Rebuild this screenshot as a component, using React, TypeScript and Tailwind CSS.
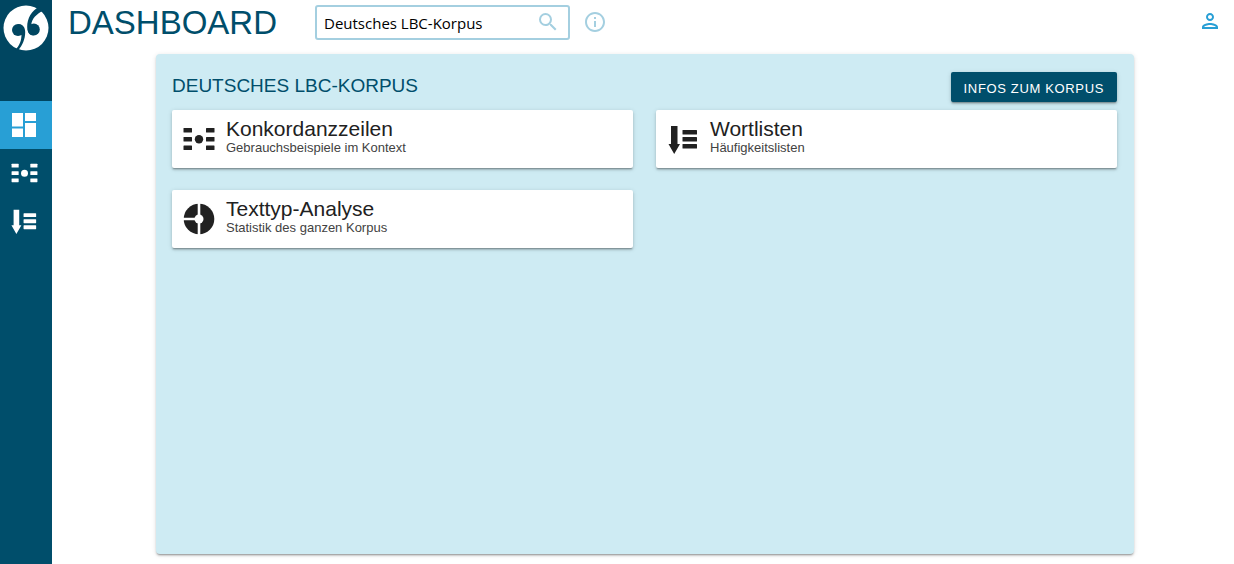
import type { ReactNode } from "react";
import { MdInfoOutline, MdOutlinePerson, MdSearch } from "react-icons/md";

type IconProps = { className?: string };

const Logo = () => (
    <svg viewBox="0 0 46 46" className="h-[46px] w-[46px]" aria-hidden="true">
        <circle cx="23" cy="23" r="22.5" fill="#fff" />
        <g fill="#004661">
            <circle cx="15" cy="25" r="6" />
            <path d="M15 19C19.500 19 22.200 22 22.200 27C22.200 34 19.500 40.500 15 45.500L12 45C16.500 41 18.800 35 18.400 29Z" />
            <circle cx="30.8" cy="24.500" r="6" />
            <path d="M30.500 30.500C26.500 30.500 24.200 27 24.200 22C24.200 13 28.500 6 36.500 1.500L40.500 5.500C33.500 9 29 13.500 28.300 19.500Z" />
        </g>
    </svg>
);

const DashboardIcon = ({ className }: IconProps) => (
    <svg viewBox="0 0 24 24" fill="currentColor" className={className}>
        <path d="M0 0h11v13.500H0zM0 15.500h11V24H0zM13 0h11v8H13zM13 10h11v14H13z" />
    </svg>
);

const ConcordanceIcon = ({ className }: IconProps) => (
    <svg viewBox="0 0 32 24" fill="currentColor" className={className}>
        <rect x="0.500" y="1" width="8.500" height="4.500" rx="0.500" />
        <rect x="0.500" y="10" width="8.500" height="4.500" rx="0.500" />
        <rect x="0.500" y="18.500" width="8.500" height="4.500" rx="0.500" />
        <rect x="23" y="1" width="8.500" height="4.500" rx="0.500" />
        <rect x="23" y="10" width="8.500" height="4.500" rx="0.500" />
        <rect x="23" y="18.500" width="8.500" height="4.500" rx="0.500" />
        <circle cx="16" cy="12.200" r="4.200" />
    </svg>
);

const WordlistIcon = ({ className }: IconProps) => (
    <svg viewBox="0 0 30 30" fill="currentColor" className={className}>
        <path d="M3 2h6.500v18h2.500L6.200 30 .5 20H3z" />
        <rect x="14.500" y="6" width="14.500" height="4.500" rx="0.500" />
        <rect x="14.500" y="13" width="14.500" height="4.500" rx="0.500" />
        <rect x="14.500" y="20" width="14.500" height="4.500" rx="0.500" />
    </svg>
);

const TextTypeIcon = ({ className }: IconProps) => (
    <svg viewBox="0 0 32 32" className={className}>
        <circle cx="16" cy="16" r="15.300" fill="currentColor" />
        <circle cx="16" cy="16" r="4.500" fill="#fff" />
        <path d="M16 0v32M0 16h16" stroke="#fff" strokeWidth="2.600" />
    </svg>
);

const FeatureCard = ({
    icon,
    title,
    description,
}: {
    icon: ReactNode;
    title: string;
    description: string;
}) => (
    <a
        href="#"
        className="flex h-[58px] items-center gap-[11px] rounded-xs bg-white pl-[11px] text-[#212121] shadow-[0_2px_2px_rgba(0,0,0,0.16),0_1px_5px_rgba(0,0,0,0.14),0_2px_1px_-1px_rgba(0,0,0,0.2)]"
    >
        <span className="flex w-8 shrink-0 justify-center">{icon}</span>
        <span className="flex flex-col pb-[6px]">
            <span className="text-[21px] leading-[22px]">{title}</span>
            <span className="text-[13px] leading-[15px] text-[#424242]">
                {description}
            </span>
        </span>
    </a>
);

const Sidebar = () => (
    <aside className="flex w-[52px] shrink-0 flex-col bg-[#004e6b]">
        <a
            href="#"
            aria-label="Home"
            className="flex h-[101px] justify-center bg-[#004661] pt-[5px]"
        >
            <Logo />
        </a>
        <nav className="flex flex-col text-white">
            <a
                href="#"
                aria-label="Dashboard"
                className="flex h-12 items-center justify-center bg-[#289fd5] pr-1"
            >
                <DashboardIcon className="h-6 w-6" />
            </a>
            <a
                href="#"
                aria-label="Konkordanzzeilen"
                className="flex h-12 items-center justify-center pr-1"
            >
                <ConcordanceIcon className="h-5 w-[27px]" />
            </a>
            <a
                href="#"
                aria-label="Wortlisten"
                className="flex h-12 items-center justify-center pr-1"
            >
                <WordlistIcon className="h-[26px] w-[26px]" />
            </a>
        </nav>
    </aside>
);

const Header = () => (
    <header className="flex h-11 items-center pr-3 pl-4">
        <h1 className="w-[247px] pt-[2px] text-[33px] leading-10 text-[#004e6b]">
            DASHBOARD
        </h1>
        <label className="flex h-[35px] w-[255px] items-center rounded-[3px] border-2 border-[#a4cfe0] bg-white pr-2 pl-[7px]">
            <input
                aria-label="Korpus"
                defaultValue="Deutsches LBC-Korpus"
                className="min-w-0 flex-1 pt-[2px] font-['Open_Sans',sans-serif] text-[15px] text-black outline-none"
            />
            <MdSearch size={24} className="shrink-0 text-[#a4cfe0]" />
        </label>
        <button
            type="button"
            aria-label="Info"
            className="ml-[13px] text-[#a4cfe0]"
        >
            <MdInfoOutline size={24} />
        </button>
        <button
            type="button"
            aria-label="Konto"
            className="ml-auto pb-[2px] text-[#289fd5]"
        >
            <MdOutlinePerson size={24} />
        </button>
    </header>
);

export default function App() {
    return (
        <div className="flex min-h-screen bg-white font-['Liberation_Sans',Arial,sans-serif]">
            <Sidebar />
            <div className="flex min-w-0 flex-1 flex-col">
                <Header />
                <main className="flex flex-1 flex-col pt-[10px] pr-[100px] pb-[10px] pl-[104px]">
                    <section className="flex-1 rounded-sm bg-[#ceebf3] px-4 pt-[18px] pr-[17px] shadow-[0_2px_2px_rgba(0,0,0,0.14),0_1px_5px_rgba(0,0,0,0.12),0_2px_1px_-1px_rgba(0,0,0,0.2)]">
                        <div className="mb-2 flex items-start justify-between">
                            <h2 className="text-[19px] leading-7 text-[#004e6b]">
                                DEUTSCHES LBC-KORPUS
                            </h2>
                            <button
                                type="button"
                                className="h-[30px] rounded-xs bg-[#004e6b] px-[13px] pt-[3px] text-[13px] tracking-wider text-white shadow-[0_2px_2px_rgba(0,0,0,0.16),0_1px_5px_rgba(0,0,0,0.14),0_2px_1px_-1px_rgba(0,0,0,0.2)]"
                            >
                                INFOS ZUM KORPUS
                            </button>
                        </div>
                        <div className="grid grid-cols-2 gap-x-[23px] gap-y-[22px]">
                            <FeatureCard
                                icon={<ConcordanceIcon className="h-6 w-8" />}
                                title="Konkordanzzeilen"
                                description="Gebrauchsbeispiele im Kontext"
                            />
                            <FeatureCard
                                icon={
                                    <WordlistIcon className="h-[30px] w-[30px]" />
                                }
                                title="Wortlisten"
                                description="Häufigkeitslisten"
                            />
                            <FeatureCard
                                icon={<TextTypeIcon className="h-8 w-8" />}
                                title="Texttyp-Analyse"
                                description="Statistik des ganzen Korpus"
                            />
                        </div>
                    </section>
                </main>
            </div>
        </div>
    );
}
